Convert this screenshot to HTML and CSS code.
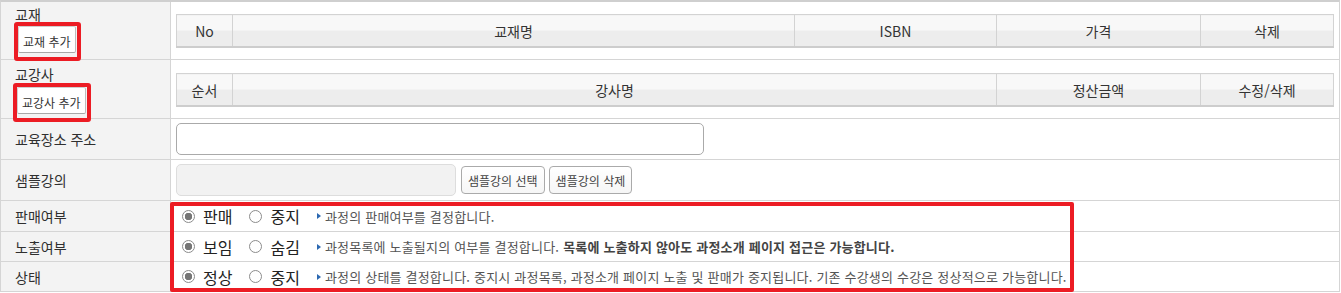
FILE: index.html
```html
<!DOCTYPE html>
<html lang="ko">
<head>
    <meta charset="UTF-8">
    <meta name="viewport" content="width=device-width, initial-scale=1.0">
    <title>과정 정보</title>
    <link rel="stylesheet" href="styles.css">
</head>
<body>
    <div class="course-form">
        <!-- 교재 -->
        <div class="label label-top label-book">
            <span class="label-text">교재</span>
            <span class="mark mark-book"><button class="add-btn">교재 추가</button></span>
        </div>
        <div class="field field-book">
            <table class="list-table">
                <colgroup>
                    <col class="col-no">
                    <col class="col-name">
                    <col class="col-isbn">
                    <col class="col-price">
                    <col class="col-del">
                </colgroup>
                <tr>
                    <th>No</th>
                    <th>교재명</th>
                    <th>ISBN</th>
                    <th>가격</th>
                    <th>삭제</th>
                </tr>
            </table>
        </div>

        <!-- 교강사 -->
        <div class="label label-top label-tutor">
            <span class="label-text">교강사</span>
            <span class="mark mark-tutor"><button class="add-btn">교강사 추가</button></span>
        </div>
        <div class="field field-tutor">
            <table class="list-table">
                <colgroup>
                    <col class="col-no">
                    <col class="col-tutor">
                    <col class="col-price">
                    <col class="col-del">
                </colgroup>
                <tr>
                    <th>순서</th>
                    <th>강사명</th>
                    <th>정산금액</th>
                    <th>수정/삭제</th>
                </tr>
            </table>
        </div>

        <!-- 교육장소 -->
        <div class="label row-input">교육장소 주소</div>
        <div class="field row-input">
            <input type="text" class="text-input address-input">
        </div>

        <!-- 샘플강의 -->
        <div class="label row-input">샘플강의</div>
        <div class="field row-input">
            <input type="text" class="text-input sample-input" readonly>
            <button class="round-btn first-btn">샘플강의 선택</button>
            <button class="round-btn">샘플강의 삭제</button>
        </div>

        <!-- 판매 / 노출 / 상태 -->
        <div class="label row-radio row-sale">판매여부</div>
        <div class="field row-radio row-sale">
            <label class="opt"><input type="radio" name="sale" checked>판매</label>
            <label class="opt"><input type="radio" name="sale">중지</label>
            <span class="desc">과정의 판매여부를 결정합니다.</span>
        </div>

        <div class="label row-radio">노출여부</div>
        <div class="field row-radio">
            <label class="opt"><input type="radio" name="show" checked>보임</label>
            <label class="opt"><input type="radio" name="show">숨김</label>
            <span class="desc">과정목록에 노출될지의 여부를 결정합니다. <strong>목록에 노출하지 않아도 과정소개 페이지 접근은 가능합니다.</strong></span>
        </div>

        <div class="label row-radio">상태</div>
        <div class="field row-radio">
            <label class="opt"><input type="radio" name="state" checked>정상</label>
            <label class="opt"><input type="radio" name="state">중지</label>
            <span class="desc">과정의 상태를 결정합니다. 중지시 과정목록, 과정소개 페이지 노출 및 판매가 중지됩니다. 기존 수강생의 수강은 정상적으로 가능합니다.</span>
        </div>

        <!-- highlight box over the radio rows -->
        <div class="radio-mark"></div>
    </div>
</body>
</html>
```

FILE: styles.css
```css
/* course edit form */
body {
    margin: 0;
    font-family: "Noto Sans CJK KR", "Noto Sans", sans-serif;
    color: #333;
    background: #fff;
}

.course-form {
    position: relative;
    display: grid;
    grid-template-columns: 170px 1fr;
    grid-template-rows: 58px 59px 41px 41px 31px 30px 30px;
    width: 1340px;
    box-sizing: border-box;
    border-top: 2px solid #cfcfcf;
    border-left: 1px solid #d5d5d5;
    border-right: 1px solid #d5d5d5;
}

.label {
    box-sizing: border-box;
    background-color: #f3f3f3;
    border-right: 1px solid #d5d5d5;
    border-bottom: 1px solid #d5d5d5;
    padding-left: 14px;
    font-size: 14px;
    color: #2f2f2f;
    display: flex;
    align-items: center;
}

.field {
    box-sizing: border-box;
    border-bottom: 1px solid #d5d5d5;
    padding: 0 5px;
    display: flex;
    align-items: center;
}

/* label cells with a button under the title */
.label-top {
    display: block;
}

.label-book {
    padding-top: 4px;
}

.label-tutor {
    padding-top: 6px;
}

.label-text {
    display: block;
    line-height: 16px;
}

.mark {
    position: relative;
    z-index: 1;
    display: inline-block;
    border: 4px solid #ec1c24;
    border-radius: 3px;
    padding: 0 1px 4px 0;
    line-height: 0;
}

.mark-book {
    margin-left: -1px;
}

.mark-tutor {
    margin-top: 1px;
    margin-left: -2px;
}

.add-btn {
    height: 27px;
    padding: 4px 4px 0;
    font-family: inherit;
    font-size: 12px;
    color: #333;
    background: #fff;
    border: 1px solid #cfcfcf;
    border-bottom-color: #a8a8a8;
    border-right-color: #bdbdbd;
    border-radius: 2px;
}

/* header-only list tables */
.field-book,
.field-tutor {
    align-items: flex-start;
}

.field-book {
    padding-top: 12px;
}

.field-tutor {
    padding-top: 13px;
}

.list-table {
    width: 100%;
    table-layout: fixed;
    border-collapse: collapse;
}

.list-table th {
    height: 31px;
    padding: 0;
    font-size: 14px;
    font-weight: normal;
    color: #333;
    text-align: center;
    border: 1px solid #d3d3d3;
    border-bottom: 2px solid #cdcdcd;
    background: linear-gradient(#f8f8f8 50%, #ededed 50%);
}

.col-no { width: 56px; }
.col-isbn { width: 202px; }
.col-price { width: 204px; }
.col-del { width: 133px; }

/* inputs */
.text-input {
    box-sizing: border-box;
    height: 32px;
    margin: 0;
    border-radius: 5px;
    font-family: inherit;
    font-size: 13px;
}

.address-input {
    width: 528px;
    border: 1px solid #aaa;
    background: #fff;
}

.sample-input {
    width: 280px;
    border: 1px solid #ddd;
    background: #f2f2f2;
}

.round-btn {
    height: 28px;
    margin-left: 4px;
    padding: 0 6px;
    font-family: inherit;
    font-size: 12px;
    color: #444;
    background: linear-gradient(#fff, #f6f6f6);
    border: 1px solid #aaa;
    border-radius: 4px;
}

.first-btn {
    margin-left: 5px;
}

/* radio rows */
.opt {
    display: inline-flex;
    align-items: center;
    gap: 8px;
    margin-right: 17px;
    font-size: 16px;
    color: #222;
}

.opt:first-child {
    margin-left: 6px;
}

.opt input {
    appearance: none;
    -webkit-appearance: none;
    box-sizing: border-box;
    width: 13px;
    height: 13px;
    margin: 0;
    border: 1px solid #8c8c8c;
    border-radius: 50%;
    background: #fff;
}

.opt input:checked {
    background: radial-gradient(circle, #767676 0 3.5px, #fff 4px);
}

.desc {
    font-size: 13px;
    letter-spacing: 0.2px;
    color: #555;
    display: inline-flex;
    align-items: center;
}

.desc::before {
    content: "";
    width: 0;
    height: 0;
    margin-right: 4px;
    border-left: 4px solid #2b68b1;
    border-top: 3px solid transparent;
    border-bottom: 3px solid transparent;
}

.desc strong {
    margin-left: 4px;
    color: #444;
}

.radio-mark {
    position: absolute;
    left: 169px;
    top: 200px;
    width: 904px;
    height: 90px;
    box-sizing: border-box;
    border: 4px solid #ec1c24;
    border-radius: 2px;
    pointer-events: none;
}
```
